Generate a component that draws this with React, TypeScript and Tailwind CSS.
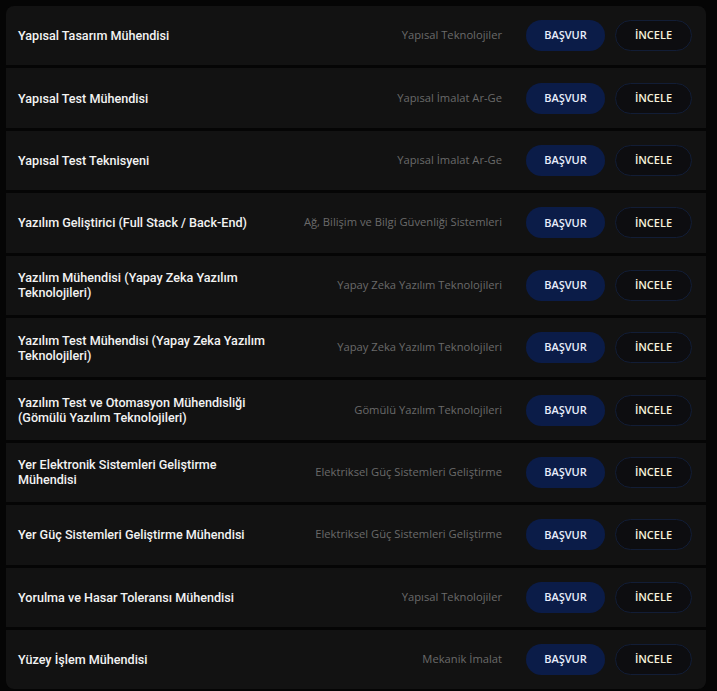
import React from "react";

interface Job {
    title: string;
    unit: string;
}

const jobs: Job[] = [
    { title: "Yapısal Tasarım Mühendisi", unit: "Yapısal Teknolojiler" },
    { title: "Yapısal Test Mühendisi", unit: "Yapısal İmalat Ar-Ge" },
    { title: "Yapısal Test Teknisyeni", unit: "Yapısal İmalat Ar-Ge" },
    { title: "Yazılım Geliştirici (Full Stack / Back-End)", unit: "Ağ, Bilişim ve Bilgi Güvenliği Sistemleri" },
    { title: "Yazılım Mühendisi (Yapay Zeka Yazılım Teknolojileri)", unit: "Yapay Zeka Yazılım Teknolojileri" },
    { title: "Yazılım Test Mühendisi (Yapay Zeka Yazılım Teknolojileri)", unit: "Yapay Zeka Yazılım Teknolojileri" },
    { title: "Yazılım Test ve Otomasyon Mühendisliği (Gömülü Yazılım Teknolojileri)", unit: "Gömülü Yazılım Teknolojileri" },
    { title: "Yer Elektronik Sistemleri Geliştirme Mühendisi", unit: "Elektriksel Güç Sistemleri Geliştirme" },
    { title: "Yer Güç Sistemleri Geliştirme Mühendisi", unit: "Elektriksel Güç Sistemleri Geliştirme" },
    { title: "Yorulma ve Hasar Toleransı Mühendisi", unit: "Yapısal Teknolojiler" },
    { title: "Yüzey İşlem Mühendisi", unit: "Mekanik İmalat" },
];

const JobRow = ({ job }: { job: Job }) => {
    return (
        <div className="flex h-[59.4px] items-center bg-[#121212] pl-3 pr-[14px]">
            <div className="w-[254px] text-[12.6px] font-medium leading-[15px] text-[#f2f2f2] [font-family:Roboto,sans-serif]">
                {job.title}
            </div>
            <div className="flex-1 pr-6 text-right text-[11.2px] text-[#6a6a6a] [font-family:'Open_Sans',sans-serif]">
                {job.unit}
            </div>
            <button className="flex h-[31px] w-[79px] items-center justify-center rounded-full bg-[#0b1c48] text-[11px] font-semibold text-[#e8eefc] [font-family:'Open_Sans',sans-serif]">
                BAŞVUR
            </button>
            <button className="ml-[10px] flex h-[31px] w-[77px] items-center justify-center rounded-full border border-[#121d36] bg-[#0d0d10] text-[11px] font-semibold text-[#f6f2dc] [font-family:'Open_Sans',sans-serif]">
                İNCELE
            </button>
        </div>
    );
};

const App = () => {
    return (
        <div className="min-h-screen bg-[#050505] pl-[6px] pr-[11px] pt-[6px]">
            <div className="flex flex-col gap-[3px] overflow-hidden rounded-lg bg-[#050505]">
                {jobs.map((job) => (
                    <JobRow key={job.title} job={job} />
                ))}
            </div>
        </div>
    );
};

export default App;
